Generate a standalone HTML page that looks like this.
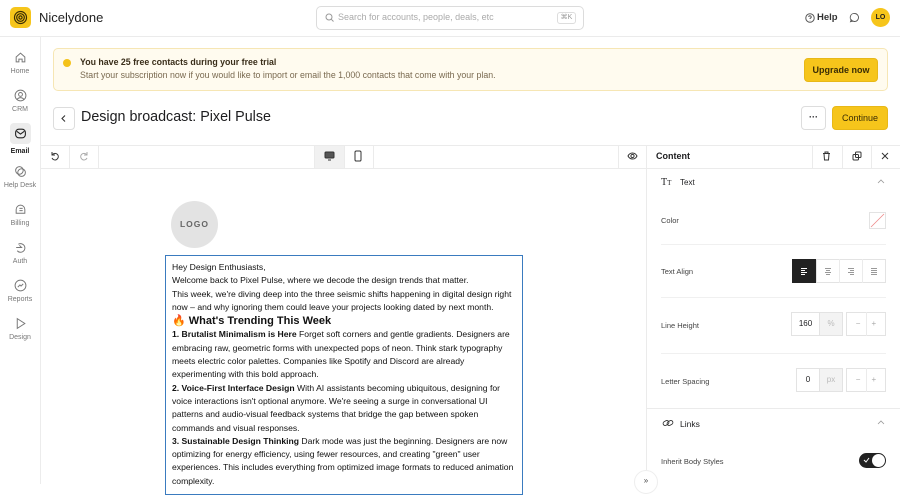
<!DOCTYPE html>
<html><head><meta charset="utf-8"><style>
*{box-sizing:border-box;margin:0;padding:0}
body{width:900px;height:484px;overflow:hidden;background:#fff;font-family:"Liberation Sans",sans-serif;color:#1d1d1f;position:relative}
.a{position:absolute}
.side{left:0;top:37px;width:41px;height:447px;border-right:1px solid #ececec}
.nav{position:absolute;left:0;width:40px;text-align:center;font-size:7px;color:#777}
.nav svg{display:block;margin:0 auto 4px}
.ln{position:absolute;background:#ebebeb}
.email{left:165px;top:255px;width:358px;height:240px;border:1.5px solid #3a7bbf;padding:5px 6px;font-family:"Liberation Sans",Arial,sans-serif;font-size:8.6px;line-height:13.3px;color:#111}
.lab{position:absolute;left:661px;font-size:7.5px;color:#444}
.bx{position:absolute;border:1px solid #e3e3e3;background:#fff;font-size:8px;text-align:center}
</style></head><body>
<div class="a" style="left:10px;top:7px;width:21px;height:21px;border-radius:5px;background:#f6c51b"></div>
<svg class="a" style="left:13px;top:10px" width="15" height="15" viewBox="0 0 15 15" fill="none" stroke="#3a2d05" stroke-width="1.2"><circle cx="7.5" cy="7.5" r="6"/><circle cx="7.5" cy="7.5" r="3.8"/><circle cx="7.5" cy="7.5" r="1.6"/></svg>
<div class="a" style="left:39px;top:10px;font-size:13px;color:#222">Nicelydone</div>
<div class="a" style="left:316px;top:6px;width:268px;height:24px;border:1px solid #dcdcdc;border-radius:5px"></div>
<svg class="a" style="left:325px;top:13px" width="9" height="9" viewBox="0 0 9 9" fill="none" stroke="#999" stroke-width="1"><circle cx="4" cy="4" r="3"/><path d="M6.2 6.2 8.5 8.5"/></svg>
<div class="a" style="left:338px;top:12px;font-size:9px;color:#aaa">Search for accounts, people, deals, etc</div>
<div class="a" style="left:557px;top:12px;width:19px;height:12px;border:1px solid #ddd;border-radius:3px;font-size:7px;color:#999;text-align:center;line-height:10px">⌘K</div>
<svg class="a" style="left:805px;top:13px" width="10" height="10" viewBox="0 0 9 9" fill="none" stroke="#555" stroke-width=".9"><circle cx="4.5" cy="4.5" r="3.8"/><path d="M3.4 3.6a1.1 1.1 0 1 1 1.5 1c-.4.2-.4.4-.4.8M4.5 6.4v.2"/></svg>
<div class="a" style="left:817px;top:12px;font-size:9.5px;font-weight:bold;color:#333">Help</div>
<svg class="a" style="left:849px;top:12px" width="11" height="11" viewBox="0 0 11 11" fill="none" stroke="#555" stroke-width=".9"><path d="M5.5 1.5a4 4 0 1 1-3.3 6.3L1.5 9.7l2-.6A4 4 0 0 1 5.5 1.5z"/></svg>
<div class="a" style="left:871px;top:8px;width:19px;height:19px;border-radius:50%;background:#f6c51b;font-size:7px;font-weight:bold;text-align:center;line-height:19px">LO</div>
<div class="ln" style="left:0;top:36px;width:900px;height:1px"></div>
<div class="a side"></div>
<div class="nav" style="top:51px"><svg width="13" height="13" viewBox="0 0 12 12" fill="none" stroke="#777" stroke-width=".9"><path d="M2 5.5 6 2l4 3.5V10H7.5V7.5h-3V10H2z"/></svg>Home</div>
<div class="nav" style="top:89px"><svg width="13" height="13" viewBox="0 0 12 12" fill="none" stroke="#777" stroke-width=".9"><circle cx="6" cy="6" r="5"/><circle cx="6" cy="5" r="1.8"/><path d="M3 9.5c1.5-2 4.5-2 6 0"/></svg>CRM</div>
<div class="a" style="left:10px;top:123px;width:21px;height:21px;border-radius:4px;background:#ececec"></div>
<div class="nav" style="top:127px;color:#222;font-weight:bold"><svg width="13" height="13" viewBox="0 0 12 12" fill="none" stroke="#222" stroke-width="1" style="margin-bottom:8px"><rect x="1.5" y="2" width="9" height="8" rx="3"/><path d="M2.5 4 6 6.5 9.5 4"/></svg>Email</div>
<div class="nav" style="top:165px"><svg width="13" height="13" viewBox="0 0 12 12" fill="none" stroke="#777" stroke-width=".9"><circle cx="5" cy="5" r="3.5"/><circle cx="7" cy="7" r="3.5"/></svg>Help Desk</div>
<div class="nav" style="top:203px"><svg width="13" height="13" viewBox="0 0 12 12" fill="none" stroke="#777" stroke-width=".9"><path d="M2 9.5h8V6a4 4 0 0 0-8 0z"/><path d="M5 5h3M5 7h3"/></svg>Billing</div>
<div class="nav" style="top:241px"><svg width="13" height="13" viewBox="0 0 12 12" fill="none" stroke="#777" stroke-width=".9"><path d="M4 3a4 4 0 1 1-1 6M2 6h5l-2-2"/></svg>Auth</div>
<div class="nav" style="top:279px"><svg width="13" height="13" viewBox="0 0 12 12" fill="none" stroke="#777" stroke-width=".9"><circle cx="6" cy="6" r="5"/><path d="M3.5 7.5 5.5 5.5 6.5 6.5 8.5 4.5"/></svg>Reports</div>
<div class="nav" style="top:317px"><svg width="13" height="13" viewBox="0 0 12 12" fill="none" stroke="#777" stroke-width=".9"><path d="M3 1.5v9L10 6z"/></svg>Design</div>
<div class="a" style="left:53px;top:48px;width:835px;height:43px;border:1px solid #f6e6b4;border-radius:5px;background:#fffbef"></div>
<div class="a" style="left:63px;top:59px;width:8px;height:8px;border-radius:50%;background:#f4c21a"></div>
<div class="a" style="left:80px;top:57px;font-size:8.8px;font-weight:bold;color:#3a2e1a">You have 25 free contacts during your free trial</div>
<div class="a" style="left:80px;top:70px;font-size:8.8px;color:#7a6a50">Start your subscription now if you would like to import or email the 1,000 contacts that come with your plan.</div>
<div class="a" style="left:804px;top:58px;width:74px;height:24px;border-radius:4px;background:#f6c51b;border:1px solid #e8b817;font-size:9px;font-weight:bold;color:#3a2d05;text-align:center;line-height:22px">Upgrade now</div>
<div class="a" style="left:53px;top:107px;width:22px;height:23px;border:1px solid #ddd;border-radius:4px"></div>
<svg class="a" style="left:60px;top:114px" width="8" height="9" viewBox="0 0 8 9" fill="none" stroke="#333" stroke-width="1.1"><path d="M5 1.5 2 4.5 5 7.5"/></svg>
<div class="a" style="left:81px;top:109px;font-size:14.3px;color:#1d1d1f">Design broadcast: Pixel Pulse</div>
<div class="a" style="left:801px;top:106px;width:25px;height:24px;border:1px solid #ddd;border-radius:4px;text-align:center;font-size:9px;line-height:20px;font-weight:bold">···</div>
<div class="a" style="left:832px;top:106px;width:56px;height:24px;border-radius:4px;background:#f6c51b;border:1px solid #e8b817;font-size:9px;color:#3a2d05;text-align:center;line-height:22px">Continue</div>
<div class="ln" style="left:41px;top:145px;width:859px;height:1px"></div>
<div class="ln" style="left:41px;top:168px;width:859px;height:1px"></div>
<div class="ln" style="left:69px;top:145px;width:1px;height:23px"></div>
<div class="ln" style="left:98px;top:145px;width:1px;height:23px"></div>
<div class="a" style="left:315px;top:146px;width:29px;height:22px;background:#f1f1f1"></div>
<div class="ln" style="left:314px;top:145px;width:1px;height:23px"></div>
<div class="ln" style="left:344px;top:145px;width:1px;height:23px"></div>
<div class="ln" style="left:373px;top:145px;width:1px;height:23px"></div>
<div class="ln" style="left:618px;top:145px;width:1px;height:23px"></div>
<div class="ln" style="left:646px;top:145px;width:1px;height:339px"></div>
<div class="ln" style="left:812px;top:145px;width:1px;height:23px"></div>
<div class="ln" style="left:842px;top:145px;width:1px;height:23px"></div>
<div class="ln" style="left:871px;top:145px;width:1px;height:23px"></div>
<svg class="a" style="left:50px;top:151px" width="10" height="10" viewBox="0 0 10 10" fill="none" stroke="#333" stroke-width="1"><path d="M2.5 3.5A3.3 3.3 0 1 1 2 7M2 1v3h3"/></svg>
<svg class="a" style="left:79px;top:151px" width="10" height="10" viewBox="0 0 10 10" fill="none" stroke="#aaa" stroke-width="1"><path d="M7.5 3.5A3.3 3.3 0 1 0 8 7M8 1v3H5"/></svg>
<svg class="a" style="left:324px;top:151px" width="11" height="10" viewBox="0 0 11 10" fill="none" stroke="#333" stroke-width="1"><rect x="1" y="1" width="9" height="6" rx="1" fill="#555"/><path d="M4 9h3"/></svg>
<svg class="a" style="left:354px;top:150px" width="8" height="12" viewBox="0 0 8 12" fill="none" stroke="#333" stroke-width="1"><rect x="1" y="1" width="6" height="10" rx="1.3"/></svg>
<svg class="a" style="left:627px;top:151px" width="11" height="10" viewBox="0 0 11 10" fill="none" stroke="#333" stroke-width="1"><path d="M1 5c2-4 7-4 9 0-2 4-7 4-9 0z"/><circle cx="5.5" cy="5" r="1.6"/></svg>
<div class="a" style="left:656px;top:151px;font-size:9px;font-weight:bold">Content</div>
<svg class="a" style="left:822px;top:151px" width="9" height="10" viewBox="0 0 9 10" fill="none" stroke="#333" stroke-width="1"><path d="M1 2.5h7M3 2.5V1h3v1.5M2 2.5l.5 6.5h4L7 2.5"/></svg>
<svg class="a" style="left:852px;top:151px" width="10" height="10" viewBox="0 0 10 10" fill="none" stroke="#333" stroke-width="1"><rect x="1" y="3.5" width="5.5" height="5.5" rx="1"/><rect x="3.5" y="1" width="5.5" height="5.5" rx="1"/></svg>
<svg class="a" style="left:881px;top:152px" width="8" height="8" stroke="#333" stroke-width="1"><path d="M1 1 7 7M7 1 1 7"/></svg>
<div class="a" style="left:171px;top:201px;width:47px;height:47px;border-radius:50%;background:#e3e3e3;font-size:8.5px;font-weight:bold;color:#666;text-align:center;line-height:47px;letter-spacing:1px">LOGO</div>
<div class="a email">Hey Design Enthusiasts,<br>Welcome back to Pixel Pulse, where we decode the design trends that matter.<br>This week, we're diving deep into the three seismic shifts happening in digital design right now – and why ignoring them could leave your projects looking dated by next month.<br><b style="font-size:11px;line-height:14px">🔥 What's Trending This Week</b><br><b>1. Brutalist Minimalism is Here</b> Forget soft corners and gentle gradients. Designers are embracing raw, geometric forms with unexpected pops of neon. Think stark typography meets electric color palettes. Companies like Spotify and Discord are already experimenting with this bold approach.<br><b>2. Voice-First Interface Design</b> With AI assistants becoming ubiquitous, designing for voice interactions isn't optional anymore. We're seeing a surge in conversational UI patterns and audio-visual feedback systems that bridge the gap between spoken commands and visual responses.<br><b>3. Sustainable Design Thinking</b> Dark mode was just the beginning. Designers are now optimizing for energy efficiency, using fewer resources, and creating "green" user experiences. This includes everything from optimized image formats to reduced animation complexity.</div>
<div class="a" style="left:634px;top:470px;width:24px;height:24px;border-radius:50%;background:#fff;border:1px solid #eee;font-size:8px;text-align:center;line-height:20px;color:#444">»</div>
<div class="a" style="left:661px;top:177px;font-size:10px;font-family:'Liberation Serif',serif">T<span style="font-size:7px">T</span></div>
<div class="a" style="left:680px;top:178px;font-size:8px">Text</div>
<svg class="a" style="left:877px;top:179px" width="8" height="5" viewBox="0 0 8 5" fill="none" stroke="#999" stroke-width=".8"><path d="M1 4 4 1 7 4"/></svg>
<div class="lab" style="top:216px">Color</div>
<div class="bx" style="left:869px;top:212px;width:17px;height:17px"><svg width="15" height="15"><path d="M1 14 14 1" stroke="#e88" stroke-width=".8"/></svg></div>
<div class="ln" style="left:661px;top:244px;width:225px;height:1px;background:#f0f0f0"></div>
<div class="lab" style="top:267px">Text Align</div>
<div class="a" style="left:792px;top:259px;width:24px;height:24px;background:#222"></div>
<div class="bx" style="left:816px;top:259px;width:70px;height:24px"></div>
<div class="ln" style="left:839px;top:259px;width:1px;height:24px"></div>
<div class="ln" style="left:862px;top:259px;width:1px;height:24px"></div>
<svg class="a" style="left:800px;top:267px" width="8" height="8" stroke="#fff" stroke-width=".9"><path d="M1 1.5h6M1 3.5h4M1 5.5h6M1 7.5h4"/></svg>
<svg class="a" style="left:824px;top:267px" width="8" height="8" stroke="#999" stroke-width=".9"><path d="M1 1.5h6M2 3.5h4M1 5.5h6M2 7.5h4"/></svg>
<svg class="a" style="left:847px;top:267px" width="8" height="8" stroke="#999" stroke-width=".9"><path d="M1 1.5h6M3 3.5h4M1 5.5h6M3 7.5h4"/></svg>
<svg class="a" style="left:870px;top:267px" width="8" height="8" stroke="#999" stroke-width=".9"><path d="M1 1.5h6M1 3.5h6M1 5.5h6M1 7.5h6"/></svg>
<div class="ln" style="left:661px;top:297px;width:225px;height:1px;background:#f0f0f0"></div>
<div class="lab" style="top:321px">Line Height</div>
<div class="bx" style="left:791px;top:312px;width:29px;height:24px;line-height:22px">160</div>
<div class="bx" style="left:819px;top:312px;width:24px;height:24px;line-height:22px;background:#f3f3f3;color:#bbb">%</div>
<div class="bx" style="left:846px;top:312px;width:40px;height:24px;line-height:22px;color:#aaa">−&nbsp;&nbsp;&nbsp;&nbsp;&nbsp;+</div>
<div class="ln" style="left:866px;top:312px;width:1px;height:24px"></div>
<div class="ln" style="left:661px;top:353px;width:225px;height:1px;background:#f0f0f0"></div>
<div class="lab" style="top:377px">Letter Spacing</div>
<div class="bx" style="left:796px;top:368px;width:24px;height:24px;line-height:22px">0</div>
<div class="bx" style="left:819px;top:368px;width:24px;height:24px;line-height:22px;background:#f3f3f3;color:#bbb">px</div>
<div class="bx" style="left:846px;top:368px;width:40px;height:24px;line-height:22px;color:#aaa">−&nbsp;&nbsp;&nbsp;&nbsp;&nbsp;+</div>
<div class="ln" style="left:866px;top:368px;width:1px;height:24px"></div>
<div class="ln" style="left:647px;top:408px;width:253px;height:1px"></div>
<svg class="a" style="left:662px;top:418px" width="12" height="10" viewBox="0 0 12 10" fill="none" stroke="#333" stroke-width=".9"><rect x="1" y="3" width="6" height="4" rx="2" transform="rotate(-30 4 5)"/><rect x="5" y="3" width="6" height="4" rx="2" transform="rotate(-30 8 5)"/></svg>
<div class="a" style="left:680px;top:419px;font-size:8.5px">Links</div>
<svg class="a" style="left:877px;top:420px" width="8" height="5" viewBox="0 0 8 5" fill="none" stroke="#999" stroke-width=".8"><path d="M1 4 4 1 7 4"/></svg>
<div class="lab" style="top:457px">Inherit Body Styles</div>
<div class="a" style="left:859px;top:453px;width:27px;height:15px;border-radius:8px;background:#222"></div>
<div class="a" style="left:872px;top:454px;width:13px;height:13px;border-radius:50%;background:#fff"></div>
<svg class="a" style="left:863px;top:457px" width="7" height="6" stroke="#fff" stroke-width="1" fill="none"><path d="M1 3 3 5 6 1"/></svg>
</body></html>
